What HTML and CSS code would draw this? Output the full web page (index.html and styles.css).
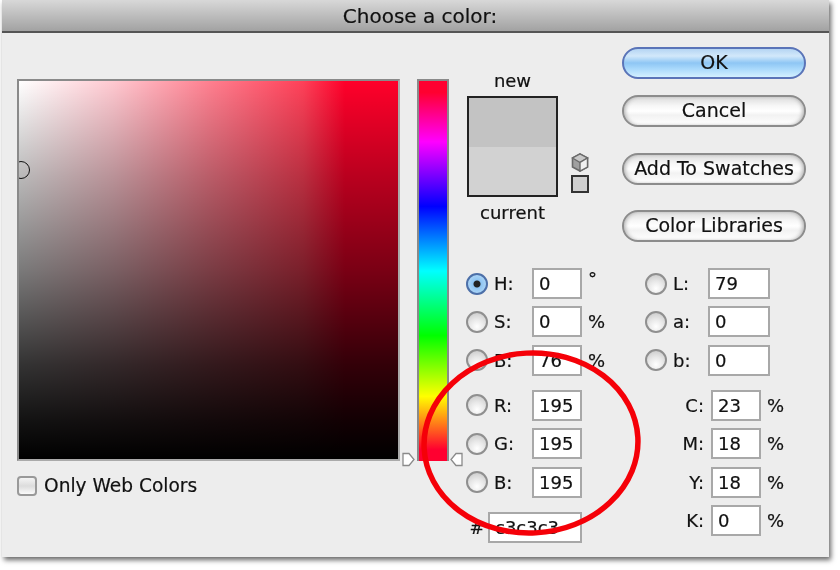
FILE: index.html
```html
<!DOCTYPE html>
<html lang="en">
<head>
  <meta charset="UTF-8" />
  <title>Choose a color</title>
  <link rel="stylesheet" href="styles.css">
</head>
<body>
  <div class="dialog">
    <div class="titlebar">Choose a color:</div>

    <div class="main">
      <div class="left-col">
        <div class="field">
          <div class="field-cursor"></div>
        </div>
        <div class="web-colors">
          <span class="checkbox"></span>
          <span>Only Web Colors</span>
        </div>
      </div>

      <div class="hue">
        <svg class="hue-arrow hue-arrow-left" width="13" height="15" viewBox="0 0 13 15"><path d="M1 1.5H7L12 7.5L7 13.5H1Z" fill="#fff" stroke="#8a8a8a" stroke-width="1.3"/></svg>
        <svg class="hue-arrow hue-arrow-right" width="13" height="15" viewBox="0 0 13 15"><path d="M12 1.5H6L1 7.5L6 13.5H12Z" fill="#fff" stroke="#8a8a8a" stroke-width="1.3"/></svg>
      </div>

      <div class="right-col">
        <div class="top-row">
          <div class="preview">
            <div class="preview-label">new</div>
            <div class="swatch">
              <div class="swatch-new"></div>
              <div class="swatch-current"></div>
            </div>
            <div class="preview-label current-label">current</div>
          </div>

          <div class="gamut">
            <svg width="18" height="19" viewBox="0 0 18 19">
              <path d="M9 1L16.5 5V14L9 18L1.5 14V5Z" fill="#a0a0a0" stroke="#6a6a6a" stroke-width="1.6"/>
              <path d="M1.5 5L9 9.5L16.5 5L9 1Z" fill="#c8c8c8" stroke="#6a6a6a" stroke-width="1.4"/>
              <path d="M9 9.5V18L16.5 14V5Z" fill="#f0f0f0" stroke="#6a6a6a" stroke-width="1.4"/>
            </svg>
            <div class="web-swatch"></div>
          </div>

          <div class="buttons">
            <button class="btn btn-ok">OK</button>
            <button class="btn">Cancel</button>
            <button class="btn btn-spaced">Add To Swatches</button>
            <button class="btn btn-spaced2">Color Libraries</button>
          </div>
        </div>

        <div class="values">
          <div class="values-col">
            <div class="row"><span class="radio radio-on"></span><span class="lbl">H:</span><input class="inp" value="0" readonly><span class="unit deg">°</span></div>
            <div class="row"><span class="radio"></span><span class="lbl">S:</span><input class="inp" value="0" readonly><span class="unit">%</span></div>
            <div class="row"><span class="radio"></span><span class="lbl">B:</span><input class="inp" value="76" readonly><span class="unit">%</span></div>
            <div class="row row-group"><span class="radio"></span><span class="lbl">R:</span><input class="inp" value="195" readonly></div>
            <div class="row"><span class="radio"></span><span class="lbl">G:</span><input class="inp" value="195" readonly></div>
            <div class="row"><span class="radio"></span><span class="lbl">B:</span><input class="inp" value="195" readonly></div>
            <div class="row row-group"><span class="hash">#</span><input class="inp inp-hex" value="c3c3c3" readonly></div>
          </div>

          <div class="values-col">
            <div class="row"><span class="radio"></span><span class="lbl lbl-lab">L:</span><input class="inp inp-lab" value="79" readonly></div>
            <div class="row"><span class="radio"></span><span class="lbl lbl-lab">a:</span><input class="inp inp-lab" value="0" readonly></div>
            <div class="row"><span class="radio"></span><span class="lbl lbl-lab">b:</span><input class="inp inp-lab" value="0" readonly></div>
            <div class="row row-group"><span class="lbl lbl-cmyk">C:</span><input class="inp" value="23" readonly><span class="unit">%</span></div>
            <div class="row"><span class="lbl lbl-cmyk">M:</span><input class="inp" value="18" readonly><span class="unit">%</span></div>
            <div class="row"><span class="lbl lbl-cmyk">Y:</span><input class="inp" value="18" readonly><span class="unit">%</span></div>
            <div class="row"><span class="lbl lbl-cmyk">K:</span><input class="inp" value="0" readonly><span class="unit">%</span></div>
          </div>
        </div>
      </div>
    </div>
  </div>

  <!-- red marker drawn over the RGB fields -->
  <svg class="marker" width="840" height="570" viewBox="0 0 840 570">
    <ellipse cx="531" cy="443" rx="107" ry="90" transform="rotate(-3 531 443)" fill="none" stroke="#f50008" stroke-width="5.5"/>
  </svg>
</body>
</html>
```

FILE: styles.css
```css
* {
  box-sizing: border-box;
}
body {
  margin: 0;
  width: 840px;
  height: 570px;
  overflow: hidden;
  position: relative;
  background: #fff;
  font-family: "DejaVu Sans", sans-serif;
  font-size: 18px;
  color: #111;
}
.dialog {
  width: 827px;
  height: 557px;
  margin-left: 2px;
  background: #ededed;
  box-shadow: 2px 3px 5px rgba(0,0,0,0.6);
  filter: blur(0.45px);
  -webkit-text-stroke: 0.2px #111;
}
.titlebar {
  height: 33px;
  padding-left: 9px;
  text-align: center;
  font-size: 20px;
  line-height: 32px;
  background: linear-gradient(#d8d8d8, #a2a2a2);
  border-bottom: 2px solid #555;
}
.main {
  display: flex;
  padding: 14px 0 0 15px;
}
.left-col {
  margin-top: 32px;
}
.field {
  position: relative;
  width: 383px;
  height: 382px;
  overflow: hidden;
  border: 2px solid #8a8a8a;
  border-bottom-color: #aaa;
  border-right-color: #aaa;
  background:
    linear-gradient(to bottom, rgba(0,0,0,0), rgba(0,0,0,0.27) 25%, rgba(0,0,0,0.52) 50%, rgba(0,0,0,0.8) 75%, rgba(0,0,0,0.93) 90%, #000),
    linear-gradient(to right, #fff, #ffc8d0 25%, #ff8090 50%, #ff4058 75%, #ff002a 86%);
}
.field-cursor {
  position: absolute;
  left: -7px;
  top: 80px;
  width: 18px;
  height: 18px;
  border-radius: 50%;
  border: 1.5px solid #111;
}
.web-colors {
  display: flex;
  align-items: center;
  gap: 7px;
  margin-top: 14px;
  font-size: 18.6px;
}
.checkbox {
  width: 20px;
  height: 20px;
  border: 2px solid #999;
  border-radius: 4px;
  background: linear-gradient(#f4f4f4, #dcdcdc 50%, #fafafa);
}
.hue {
  position: relative;
  width: 32px;
  height: 382px;
  margin: 32px 0 0 17px;
  border: 2px solid #8a8a8a;
  border-width: 2px 2px 0;
  background: linear-gradient(#ff0030 0%, #ff0030 3%, #ff00ff 16%, #0000ff 33%, #00ffff 50%, #00ff00 67%, #ffff00 83%, #ff0030 97%);
}
.hue-arrow {
  position: absolute;
  bottom: -6px;
}
.hue-arrow-left {
  left: -17px;
}
.hue-arrow-right {
  right: -16px;
}
.right-col {
  margin-left: 17px;
}
.top-row {
  display: flex;
  height: 221px;
}
.preview {
  width: 93px;
  padding-top: 24px;
  text-align: center;
}
.preview-label {
  line-height: 20px;
}
.current-label {
  margin-top: 6px;
}
.swatch {
  width: 91px;
  height: 101px;
  margin: 5px 0 0 1px;
  border: 2px solid #222;
  display: flex;
  flex-direction: column;
}
.swatch-new {
  flex: 1;
  background: #c3c3c3;
}
.swatch-current {
  flex: 1;
  background: #d2d2d2;
}
.gamut {
  width: 18px;
  margin-left: 12px;
  padding-top: 106px;
}
.gamut svg {
  display: block;
}
.web-swatch {
  width: 18px;
  height: 18px;
  margin-top: 3px;
  border: 2px solid #333;
  background: #d0d0d0;
}
.buttons {
  display: flex;
  flex-direction: column;
  gap: 16px;
  margin-left: 33px;
}
.btn {
  width: 184px;
  height: 32px;
  padding: 0 0 3px;
  border: 2px solid #8c8c8c;
  border-radius: 16px;
  background: linear-gradient(#dcdcdc, #f6f6f6 30%, #fff 50%, #f2f2f2 65%, #fff);
  box-shadow: inset 3px 0 4px -2px #aaa, inset -3px 0 4px -2px #aaa;
  font-family: inherit;
  font-size: 19px;
  color: #111;
}
.btn-ok {
  border-color: #5a74b8;
  background: linear-gradient(#b5d5f3, #d2e8fa 25%, #8ec6f4 50%, #a8d8fb 70%, #d3f0ff);
  box-shadow: none;
}
.btn-spaced {
  margin-top: 10px;
}
.btn-spaced2 {
  margin-top: 9px;
}
.values {
  display: flex;
}
.values-col {
  width: 179px;
}
.row {
  display: flex;
  align-items: center;
  height: 31px;
  margin-bottom: 7.4px;
}
.row-group {
  margin-top: 14px;
}
.radio {
  flex: none;
  width: 22px;
  height: 22px;
  border: 2px solid #8f8f8f;
  border-radius: 50%;
  background: radial-gradient(circle at 50% 75%, #fff, #e8e8e8 45%, #c4c4c4);
}
.radio-on {
  border-color: #4c6fa8;
  background: radial-gradient(circle, #222 0 3px, #8ec4f2 4px, #bfe0fa);
}
.lbl {
  width: 44px;
  padding-left: 6px;
}
.lbl-lab {
  width: 41px;
}
.lbl-cmyk {
  width: 66px;
  padding: 0 7px 0 0;
  text-align: right;
}
.inp {
  width: 50px;
  height: 31px;
  padding: 0 0 0 5px;
  border: 2px solid #a8a8a8;
  border-radius: 0;
  background: #fff;
  font-family: inherit;
  font-size: 18px;
  color: #111;
  outline: none;
}
.inp-lab {
  width: 62px;
}
.inp-hex {
  width: 94px;
}
.unit {
  margin-left: 6px;
}
.deg {
  align-self: flex-start;
}
.hash {
  width: 22px;
  text-align: center;
  font-size: 18px;
}
.marker {
  position: absolute;
  left: 0;
  top: 0;
  pointer-events: none;
}
```
